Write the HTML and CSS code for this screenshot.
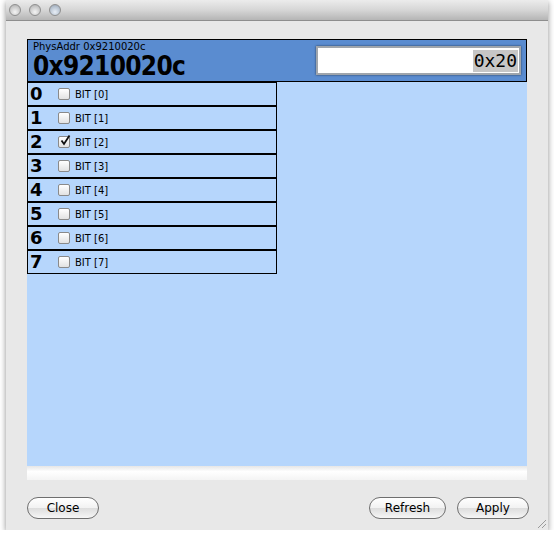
FILE: index.html
```html
<!DOCTYPE html>
<html>
<head>
<meta charset="utf-8">
<link rel="stylesheet" href="styles.css">
</head>
<body>
<div class="window">
  <div class="titlebar">
    <span class="light"></span><span class="light"></span><span class="light zoom"></span>
  </div>
  <div class="content">
    <div class="panel">
      <div class="header">
        <div class="htext">
          <div class="small">PhysAddr 0x9210020c</div>
          <div class="big">0x9210020c</div>
        </div>
        <div class="field"><span class="sel">0x20</span></div>
      </div>
      <div class="rows">
        <div class="row"><span class="num">0</span><span class="cb"></span><span class="lbl">BIT [0]</span></div>
        <div class="row"><span class="num">1</span><span class="cb"></span><span class="lbl">BIT [1]</span></div>
        <div class="row"><span class="num">2</span><span class="cb checked"><svg width="12" height="12" viewBox="0 0 12 12"><path d="M2.5 5.5 L5 9 L10.5 0.5" fill="none" stroke="#111" stroke-width="1.8"/></svg></span><span class="lbl">BIT [2]</span></div>
        <div class="row"><span class="num">3</span><span class="cb"></span><span class="lbl">BIT [3]</span></div>
        <div class="row"><span class="num">4</span><span class="cb"></span><span class="lbl">BIT [4]</span></div>
        <div class="row"><span class="num">5</span><span class="cb"></span><span class="lbl">BIT [5]</span></div>
        <div class="row"><span class="num">6</span><span class="cb"></span><span class="lbl">BIT [6]</span></div>
        <div class="row"><span class="num">7</span><span class="cb"></span><span class="lbl">BIT [7]</span></div>
      </div>
    </div>
    <div class="strip"></div>
    <div class="buttons">
      <button class="btn close">Close</button>
      <div class="spacer"></div>
      <button class="btn refresh">Refresh</button>
      <button class="btn apply">Apply</button>
    </div>
  </div>
  <div class="grip"></div>
</div>
</body>
</html>
```
FILE: styles.css
```css
html, body {
  margin: 0;
  padding: 0;
  background: #ffffff;
}
body {
  font-family: "DejaVu Sans", "Liberation Sans", sans-serif;
}
.window {
  margin-left: 6px;
  width: 542px;
  height: 530px;
  background: #e8e8e8;
  box-shadow: 0 2px 6px rgba(0,0,0,0.45);
  position: relative;
  display: flex;
  flex-direction: column;
}
.titlebar {
  height: 21px;
  box-sizing: border-box;
  background: linear-gradient(#ececec, #d6d6d6 50%, #b5b5b5);
  border-bottom: 1px solid #8e8e8e;
  display: flex;
  align-items: center;
  padding-left: 3px;
  gap: 8px;
}
.light {
  width: 12px;
  height: 12px;
  border-radius: 50%;
  box-sizing: border-box;
  border: 1px solid #8f8f8f;
  background: radial-gradient(circle at 50% 70%, #f4f4f4, #c9c9c9 60%, #a9a9a9);
}
.light.zoom {
  background: radial-gradient(circle at 50% 70%, #e8eef6, #b6c2d0 60%, #8f9aa8);
}
.content {
  flex: 1;
  display: flex;
  flex-direction: column;
  padding: 18px 21px 0 21px;
}
.panel {
  width: 500px;
  height: 427px;
  background: #b6d6fc;
}
.header {
  height: 43px;
  box-sizing: border-box;
  border: 1px solid #000;
  background: #5a8cd0;
  display: flex;
  justify-content: space-between;
  align-items: flex-start;
  overflow: hidden;
}
.htext {
  padding: 1px 0 0 5px;
}
.small {
  font-size: 10px;
  line-height: 12px;
  color: #000;
}
.big {
  font-family: "DejaVu Sans Condensed", "DejaVu Sans", sans-serif;
  font-size: 26px;
  letter-spacing: -0.7px;
  font-weight: bold;
  line-height: 27px;
  color: #000;
}
.field {
  margin: 6px 5px 0 0;
  width: 205px;
  height: 29px;
  box-sizing: border-box;
  border: 2px solid #9fa5ac;
  box-shadow: 0 0 2px rgba(0,0,0,0.6);
  background: #fff;
  display: flex;
  justify-content: flex-end;
  align-items: center;
  padding-right: 1px;
}
.sel {
  font-family: "DejaVu Sans Mono", "Liberation Mono", monospace;
  font-size: 18px;
  background: #c6c6c6;
  line-height: 22px;
  padding: 0 1px;
  color: #000;
}
.rows {
  width: 250px;
}
.row {
  height: 24px;
  box-sizing: border-box;
  border: 1px solid #000;
  display: flex;
  align-items: center;
}
.num {
  font-size: 18px;
  font-weight: bold;
  line-height: 22px;
  width: 30px;
  padding-left: 2px;
  box-sizing: border-box;
  color: #000;
}
.cb {
  width: 12px;
  height: 12px;
  box-sizing: border-box;
  border: 1px solid #8a8a8a;
  border-radius: 2px;
  background: linear-gradient(#ffffff, #e2e2e2);
  position: relative;
  margin-right: 5px;
}
.cb svg {
  position: absolute;
  left: 0;
  top: -2px;
}
.lbl {
  font-size: 10px;
  color: #000;
}
.strip {
  width: 500px;
  height: 14px;
  background: linear-gradient(#e6e6e6, #ffffff 40%, #f4f4f4);
}
.buttons {
  display: flex;
  margin-top: 17px;
  align-items: center;
}
.spacer {
  flex: 1;
}
.btn {
  height: 22px;
  box-sizing: border-box;
  border: 1px solid #6f6f6f;
  border-radius: 11px;
  background: linear-gradient(#ffffff, #f2f2f2 50%, #dddddd 51%, #f6f6f6);
  font-family: "DejaVu Sans", "Liberation Sans", sans-serif;
  font-size: 12px;
  color: #000;
  padding: 0;
}
.close { width: 72px; }
.refresh { width: 77px; margin-right: 11px; }
.apply { width: 72px; margin-right: -2px; }
.grip {
  position: absolute;
  right: 2px;
  bottom: 2px;
  width: 10px;
  height: 10px;
  background: repeating-linear-gradient(135deg, transparent 0 2px, #9a9a9a 2px 3px);
  clip-path: polygon(100% 0, 100% 100%, 0 100%);
}
```
